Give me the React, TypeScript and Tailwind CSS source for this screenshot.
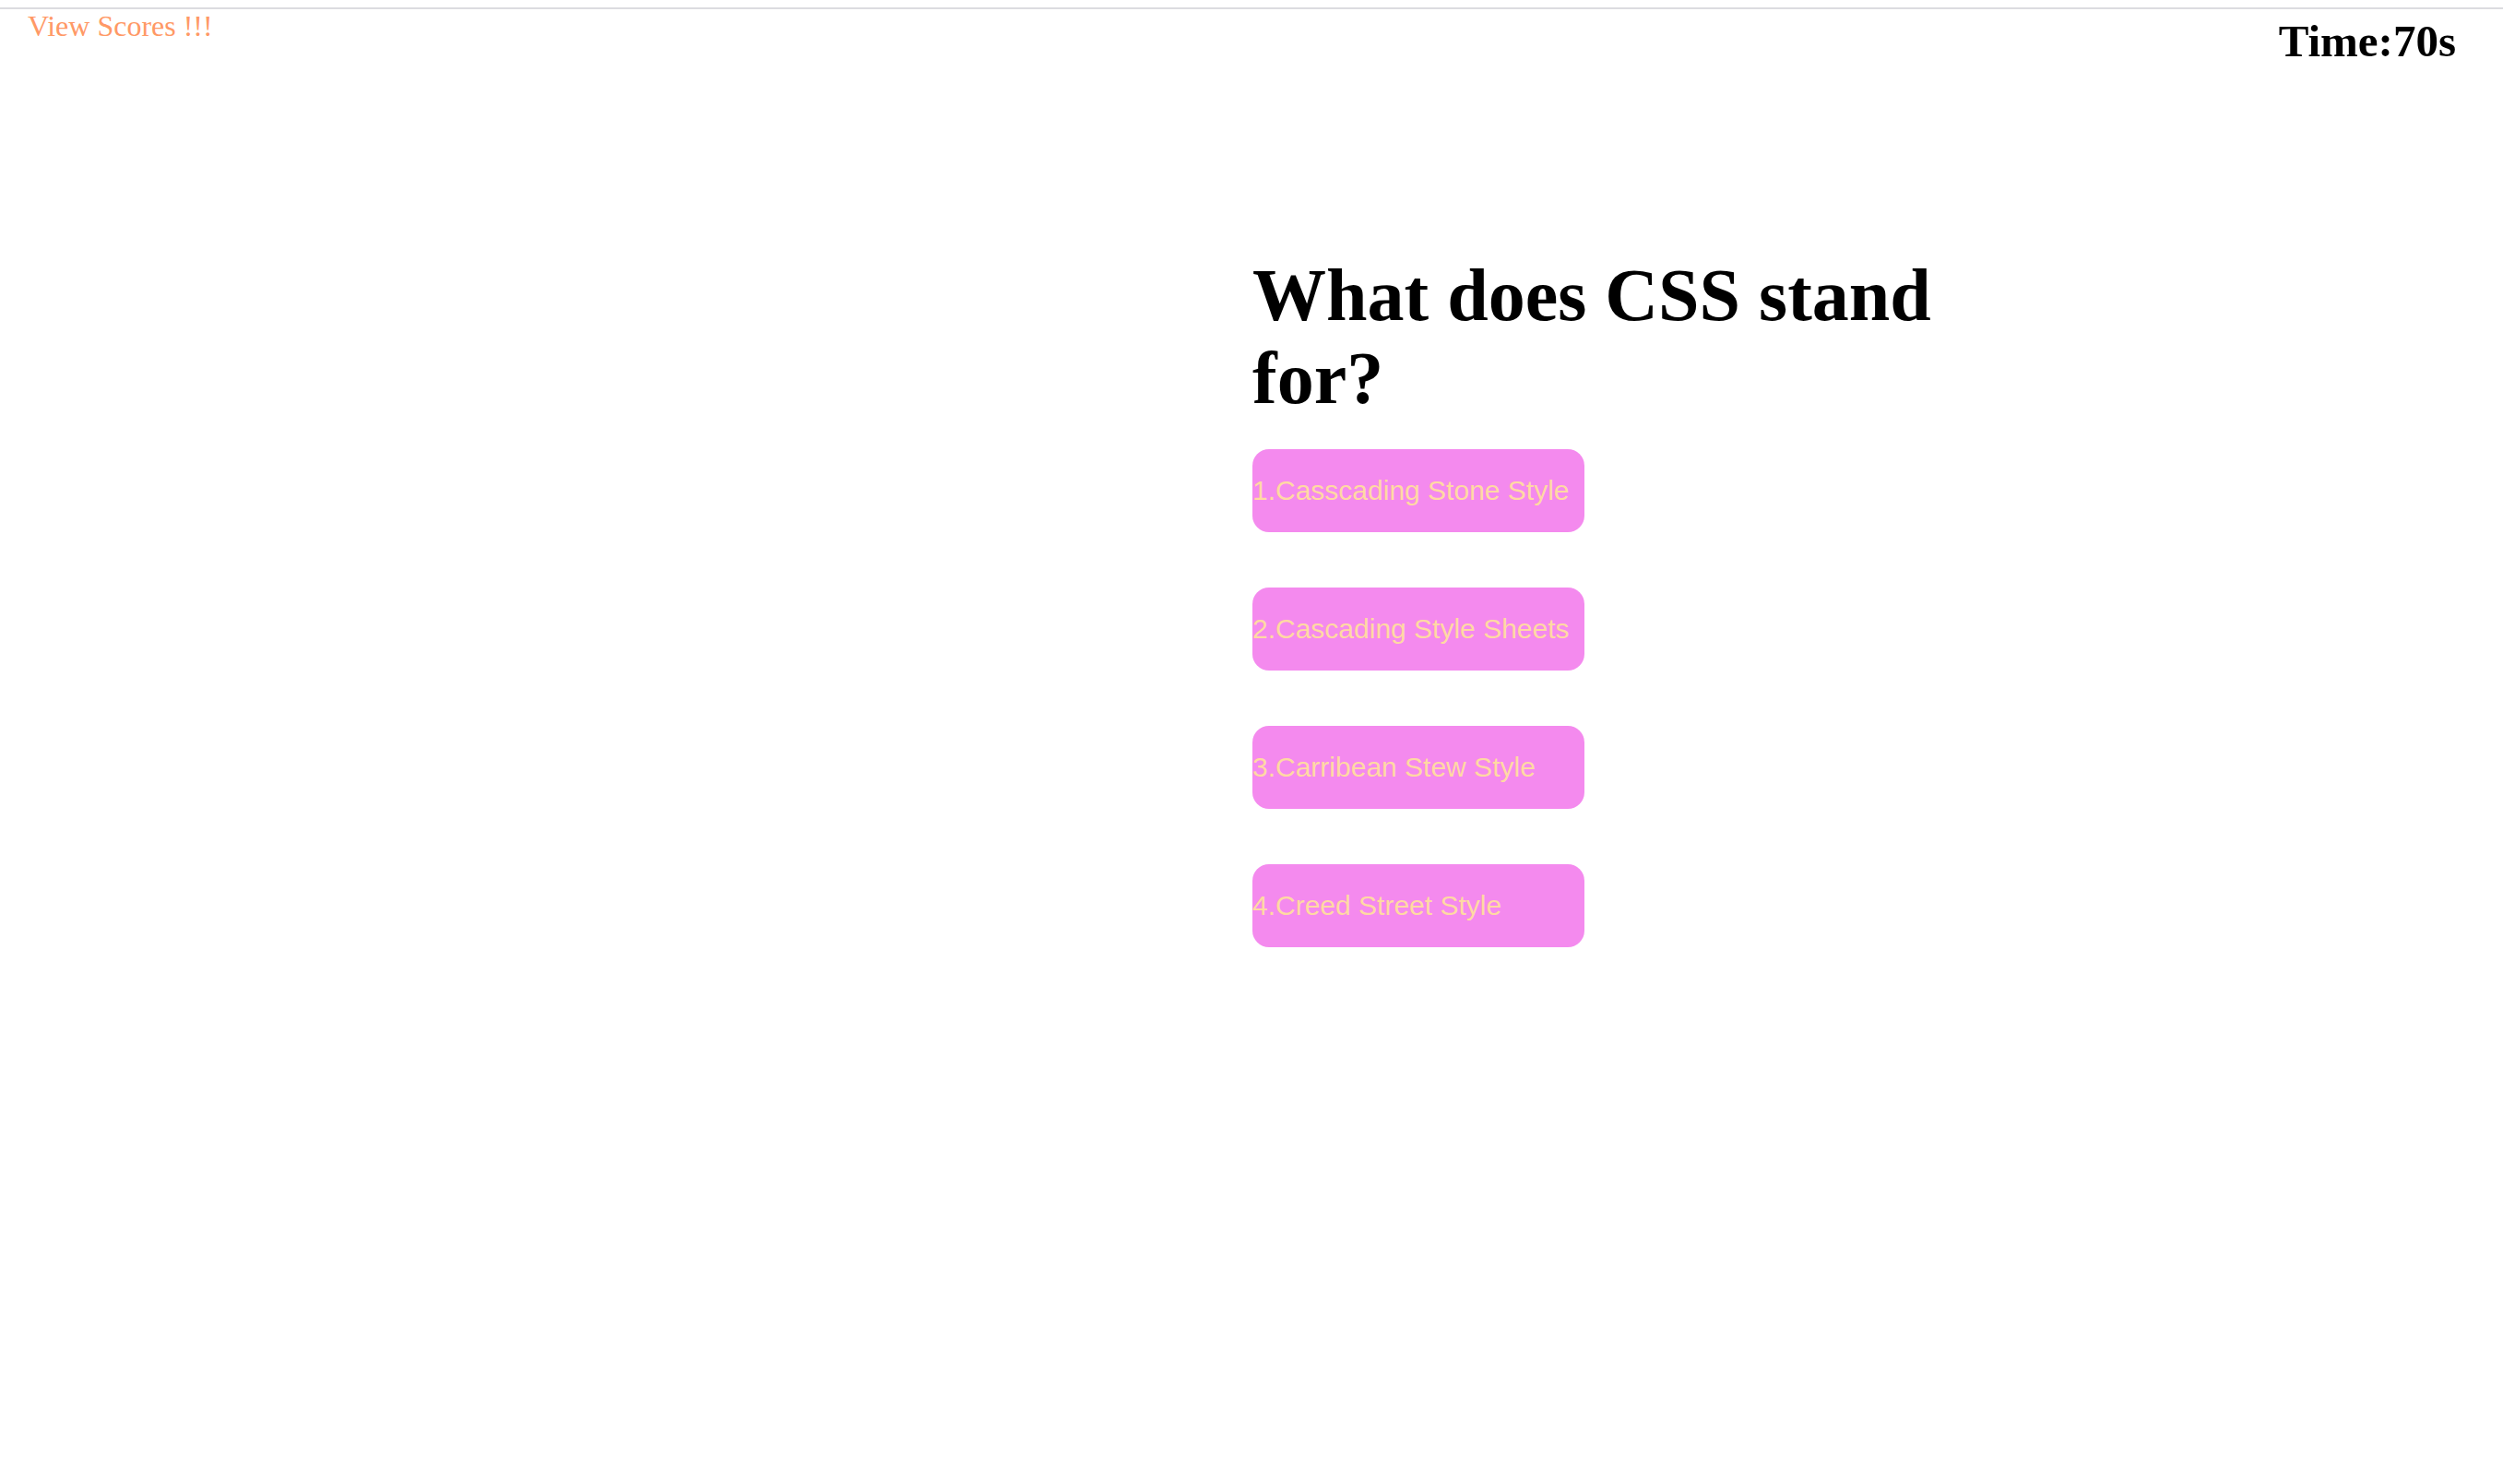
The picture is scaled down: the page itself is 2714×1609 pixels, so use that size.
import React from "react";

const answers = [
  "1.Casscading Stone Style",
  "2.Cascading Style Sheets",
  "3.Carribean Stew Style",
  "4.Creed Street Style",
];

export default function App() {
  return (
    <div className="min-h-screen bg-white font-['Liberation_Serif','Times_New_Roman',serif]">
      <div className="h-[8px]" />
      <div className="h-[2px] bg-[#dcdce0]" />
      <header className="flex items-start justify-between">
        <a className="ml-[30px] text-[32px] leading-[37px] text-[#ff9966] cursor-pointer">
          View Scores !!!
        </a>
        <div className="mt-[7px] mr-[51px] text-[49px] font-bold leading-[56px] text-black">
          Time:70s
        </div>
      </header>
      <main className="ml-[1358px] mt-[202px] w-[800px]">
        <h1 className="text-[80px] font-bold leading-[90px] text-black">
          What does CSS stand for?
        </h1>
        <div className="mt-[32px] flex flex-col gap-[60px]">
          {answers.map((a) => (
            <button
              key={a}
              className="flex h-[90px] w-[360px] items-center rounded-[18px] bg-[#f48aee] p-0 text-left font-['Liberation_Sans',Arial,sans-serif] text-[30px] leading-[34px] text-[#ffd9a3]"
            >
              {a}
            </button>
          ))}
        </div>
      </main>
    </div>
  );
}
